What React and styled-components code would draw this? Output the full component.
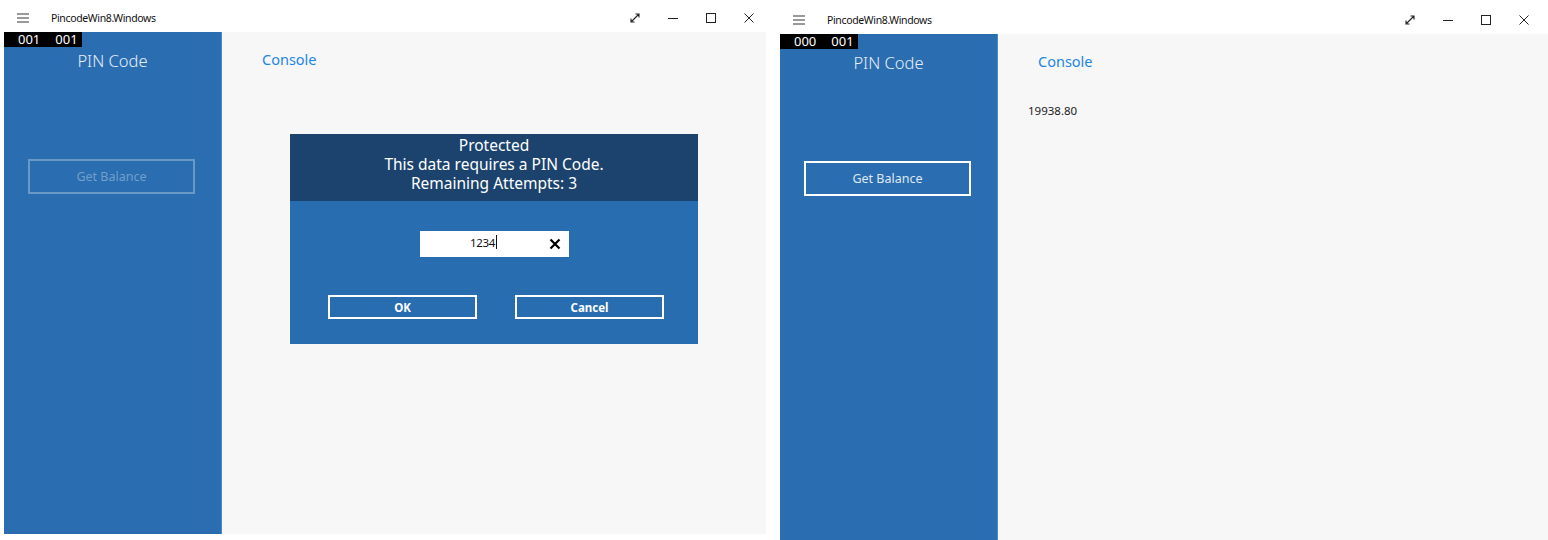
import styled, { createGlobalStyle } from 'styled-components';

const GlobalStyle = createGlobalStyle`
  html, body {
    margin: 0;
    padding: 0;
    background: #ffffff;
    font-family: "Open Sans", "Noto Sans", sans-serif;
  }
`;

function Hamburger() {
  return (
    <svg width="12" height="10" viewBox="0 0 12 10">
      <path d="M0 1h12M0 5h12M0 9h12" stroke="#333" strokeWidth="1" />
    </svg>
  );
}

function ExpandIcon() {
  return (
    <svg width="10" height="10" viewBox="0 0 10 10">
      <path d="M1 9L9 1M5.5 1H9v3.5M1 5.5V9h3.5" stroke="#222" strokeWidth="1.1" fill="none" />
    </svg>
  );
}

function MinIcon() {
  return (
    <svg width="10" height="10" viewBox="0 0 10 10">
      <path d="M0 5.5h10" stroke="#222" strokeWidth="1" />
    </svg>
  );
}

function MaxIcon() {
  return (
    <svg width="10" height="10" viewBox="0 0 10 10">
      <rect x="0.5" y="0.5" width="9" height="9" stroke="#222" strokeWidth="1" fill="none" />
    </svg>
  );
}

function CloseIcon() {
  return (
    <svg width="10" height="10" viewBox="0 0 10 10">
      <path d="M0.5 0.5l9 9M9.5 0.5l-9 9" stroke="#222" strokeWidth="1" />
    </svg>
  );
}

function ClearIcon() {
  return (
    <svg width="12" height="12" viewBox="0 0 12 12">
      <path d="M1.5 1.5l9 9M10.5 1.5l-9 9" stroke="#000" strokeWidth="2.2" />
    </svg>
  );
}

function TitleBar({ height, rightPad }) {
  return (
    <Bar $height={height} $rightPad={rightPad}>
      <Hamburger />
      <AppTitle>PincodeWin8.Windows</AppTitle>
      <Controls>
        <ExpandIcon />
        <MinIcon />
        <MaxIcon />
        <CloseIcon />
      </Controls>
    </Bar>
  );
}

function Sidebar({ counter, disabled }) {
  return (
    <Side>
      <Counter>
        {counter.map((c, i) => (
          <span key={i}>{c}</span>
        ))}
      </Counter>
      <SideTitle>PIN Code</SideTitle>
      <BalanceButton $disabled={disabled}>Get Balance</BalanceButton>
    </Side>
  );
}

export default function App() {
  return (
    <>
      <GlobalStyle />
      <Screen>
        <Window $width={762} $height={534} $offset={4}>
          <TitleBar height={32} rightPad={12} />
          <Body>
            <Sidebar counter={['001', '001']} disabled />
            <Content>
              <Heading>Console</Heading>
              <Dialog>
                <DialogHeader>
                  <div>Protected</div>
                  <div>This data requires a PIN Code.</div>
                  <div>Remaining Attempts: 3</div>
                </DialogHeader>
                <DialogBody>
                  <PinBox>
                    <PinText>1234<Caret /></PinText>
                    <ClearSlot><ClearIcon /></ClearSlot>
                  </PinBox>
                  <ButtonRow>
                    <DialogButton>OK</DialogButton>
                    <DialogButton>Cancel</DialogButton>
                  </ButtonRow>
                </DialogBody>
              </Dialog>
            </Content>
          </Body>
        </Window>
        <Window $width={768} $height={540} $offset={14}>
          <TitleBar height={34} rightPad={19} />
          <Body>
            <Sidebar counter={['000', '001']} />
            <Content>
              <Heading>Console</Heading>
              <Output>19938.80</Output>
            </Content>
          </Body>
        </Window>
      </Screen>
    </>
  );
}

const Screen = styled.div`
  display: flex;
  align-items: flex-start;
  width: 1548px;
  height: 540px;
  overflow: hidden;
`;

const Window = styled.div`
  display: flex;
  flex-direction: column;
  flex: none;
  width: ${(p) => p.$width}px;
  height: ${(p) => p.$height}px;
  margin-left: ${(p) => p.$offset}px;
  background: #ffffff;
`;

const Bar = styled.div`
  display: flex;
  align-items: center;
  flex: none;
  height: ${(p) => p.$height}px;
  padding: ${(p) => p.$height - 28}px ${(p) => p.$rightPad}px 0 13px;
  box-sizing: border-box;
`;

const AppTitle = styled.span`
  margin-left: 22px;
  font-family: "Noto Sans", sans-serif;
  font-size: 10.5px;
  color: #111;
  letter-spacing: -0.35px;
`;

const Controls = styled.div`
  display: flex;
  align-items: center;
  gap: 28px;
  margin-left: auto;
`;

const Body = styled.div`
  display: flex;
  flex: 1;
  min-height: 0;
`;

const Side = styled.div`
  position: relative;
  display: flex;
  flex-direction: column;
  align-items: center;
  flex: none;
  width: 217px;
  background: #2a6db0;
  border-right: 1px solid #4a8ad0;
`;

const Counter = styled.div`
  position: absolute;
  top: 0;
  left: 0;
  display: flex;
  gap: 15px;
  width: 78px;
  height: 15px;
  background: #000;
  color: #fff;
  font-family: "Noto Sans", sans-serif;
  font-size: 13px;
  line-height: 15px;
  padding-left: 14px;
  box-sizing: border-box;
`;

const SideTitle = styled.div`
  margin-top: 18px;
  font-family: "Noto Sans", sans-serif;
  font-size: 16.5px;
  font-weight: 300;
  line-height: 22px;
  color: #e6eef7;
`;

const BalanceButton = styled.div`
  display: flex;
  align-items: center;
  justify-content: center;
  margin-top: 87px;
  margin-right: 2px;
  width: 167px;
  height: 35px;
  box-sizing: border-box;
  border: 2px solid ${(p) => (p.$disabled ? 'rgba(255,255,255,0.3)' : '#ffffff')};
  color: ${(p) => (p.$disabled ? 'rgba(255,255,255,0.35)' : '#dfe8f3')};
  font-family: "Noto Sans", sans-serif;
  font-size: 12.5px;
`;

const Content = styled.div`
  display: flex;
  flex-direction: column;
  flex: 1;
  background: #f7f7f7;
  padding: 17px 0 0 40px;
`;

const Heading = styled.div`
  font-family: "Noto Sans", sans-serif;
  font-size: 14.5px;
  line-height: 20px;
  color: #1b86e6;
`;

const Output = styled.div`
  margin: 32px 0 0 -10px;
  font-family: "Noto Sans", sans-serif;
  font-size: 11.5px;
  color: #222;
`;

const Dialog = styled.div`
  display: flex;
  flex-direction: column;
  width: 408px;
  margin: 65px 0 0 28px;
  background: #286db0;
`;

const DialogHeader = styled.div`
  height: 67px;
  padding-top: 2px;
  box-sizing: border-box;
  background: #1b436e;
  color: #ffffff;
  text-align: center;
  font-family: "Noto Sans", sans-serif;
  font-size: 15.5px;
  line-height: 19px;
`;

const DialogBody = styled.div`
  display: flex;
  flex-direction: column;
  align-items: center;
  height: 143px;
  padding-top: 30px;
  box-sizing: border-box;
`;

const PinBox = styled.div`
  display: flex;
  align-items: center;
  width: 149px;
  height: 26px;
  background: #ffffff;
  margin-left: 1px;
`;

const PinText = styled.div`
  display: flex;
  align-items: center;
  flex: 1;
  justify-content: center;
  padding-left: 6px;
  margin-top: -4px;
  font-family: "Noto Sans", sans-serif;
  font-size: 11.5px;
  color: #111;
  letter-spacing: -0.3px;
`;

const Caret = styled.span`
  display: inline-block;
  width: 1px;
  height: 14px;
  background: #111;
  margin-left: 1px;
`;

const ClearSlot = styled.div`
  display: flex;
  align-items: center;
  justify-content: center;
  width: 28px;
  height: 26px;
`;

const ButtonRow = styled.div`
  display: flex;
  gap: 38px;
  margin: 38px 0 0 4px;
`;

const DialogButton = styled.div`
  display: flex;
  align-items: center;
  justify-content: center;
  width: 149px;
  height: 24px;
  box-sizing: border-box;
  border: 2px solid #ffffff;
  color: #ffffff;
  font-family: "Noto Sans", sans-serif;
  font-size: 11.5px;
  font-weight: 700;
`;
